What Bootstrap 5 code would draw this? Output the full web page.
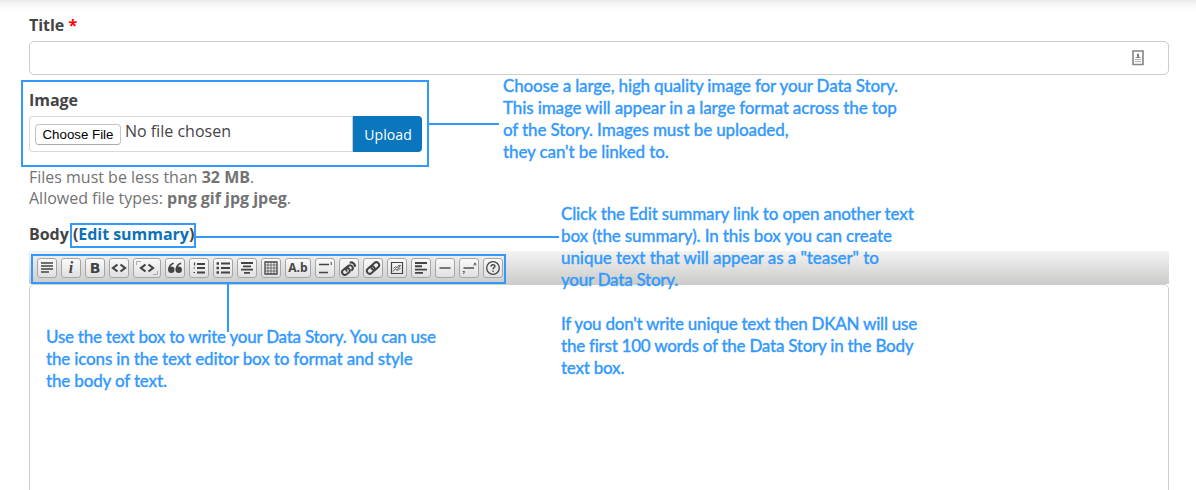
<!DOCTYPE html>
<html lang="en">
<head>
<meta charset="utf-8">
<meta name="viewport" content="width=device-width, initial-scale=1">
<title>Create Data Story</title>
<link href="https://cdn.jsdelivr.net/npm/bootstrap@5.3.0/dist/css/bootstrap.min.css" rel="stylesheet">
<style>
html, body { height: 490px; overflow: hidden; }
body { font-family: "Open Sans", sans-serif; font-size: 16px; line-height: 21px; color: #444; background: #fff; }
.page { height: 490px; padding: 15px 27px 0 29px; background: linear-gradient(#e9e9e9, #f6f6f6 4px, #fcfcfc 8px, #fff 13px) no-repeat 0 0 / 100% 13px; }
.field-label { font-weight: 700; font-size: 16px; line-height: 21px; margin: 0; display: block; letter-spacing: -.03px; }
.title-box { height: 34px; border: 1px solid #ccc; border-radius: 5px; padding-right: 24px; margin: 5px 0 15px; }
.req { color: #f00; }
.upload-row { width: 393px; height: 36px; margin: 5px 0 15px; }
.file-box { border: 1px solid #d9d9d9; border-right-color: #ccc; border-radius: 4px 0 0 4px; padding: 4px 0 0 5px; }
.choose { font: 13.3px/19px "Liberation Sans", Arial, sans-serif; color: #000; width: 86px; height: 21px; border: 1px solid #c4c4c4; border-bottom-color: #aaa; border-radius: 4px; background: #fff; padding: 0; margin-top: 3px; }
.no-file { margin-left: 4px; }
.btn-upload { width: 69px; border: 0; border-radius: 0 4px 4px 0; background: #0a76bd; color: #fff; font-size: 14px; padding: 0 0 0 1px; letter-spacing: .1px; }
.help { color: #737373; letter-spacing: -.01px; }
.body-label { margin: 15px 0 6px; }
.body-label a { color: #0a72b8; text-decoration: none; }
.tools { height: 33px; padding: 7px 8px; gap: 4px; background: linear-gradient(#f3f3f3, #cbcdca); }
.tool { width: 20px; height: 20px; border: 1px solid #a6a6a6; border-radius: 3px; background: linear-gradient(#fafafa, #e0e0e0); color: #444; padding: 0; flex: none; display: flex; align-items: center; justify-content: center; }
.tool svg { display: block; fill: none; stroke: currentColor; stroke-width: 1.6; }
.tool.w28 { width: 28px; }
.tool.w26 { width: 26px; font: 700 12px/16px "Open Sans", sans-serif; }
.tool-i { font: italic 700 16px/16px "Liberation Serif", serif; }
.tool-b { font: 700 14px/18px "DejaVu Sans", sans-serif; }
.body-box { height: 230px; border: 1px solid #ccc; border-radius: 5px; background: #fff; }
/* callouts laid over the form */
.frame { position: absolute; border: 2px solid #3399fd; pointer-events: none; }
.wire { position: absolute; background: #3399fd; }
.note { position: absolute; color: #3399fd; font: 500 17px/22px Lato, sans-serif; -webkit-text-stroke: .3px #3399fd; white-space: nowrap; letter-spacing: -.12px; }
.note span { display: block; height: 22px; }
.note .t1 { letter-spacing: -.07px; }
.note .t2 { letter-spacing: -.165px; }
.note .t3 { letter-spacing: -.25px; }
</style>
</head>
<body>
<main class="page position-relative overflow-hidden">
  <label class="field-label">Title <span class="req">*</span></label>
  <div class="title-box d-flex align-items-center justify-content-end">
    <svg width="12" height="16" viewBox="0 0 12 16"><path d="M1 1h10v13.500H1z" fill="#fff" stroke="#858585" stroke-width="1.600"/><path d="M6 3.200l1.200 1.300-.5 2.300L9 8H3l2.300-1.200-.5-2.300z" fill="#777"/><path d="M3 9.500h6M3 11.500h6" stroke="#aaa"/></svg>
  </div>
  <label class="field-label">Image</label>
  <div class="upload-row d-flex">
    <div class="file-box d-flex align-items-start flex-grow-1"><button class="choose">Choose File</button><span class="no-file">No file chosen</span></div>
    <button class="btn-upload">Upload</button>
  </div>
  <div class="help">Files must be less than <b>32 MB</b>.<br>Allowed file types: <b>png gif jpg jpeg</b>.</div>
  <label class="field-label body-label">Body (<a href="#">Edit summary</a>)</label>
  <div class="tools d-flex">
    <button class="tool"><svg width="16" height="16"><path d="M2 3h12M2 6h12M2 9h12M2 12h8"/></svg></button>
    <button class="tool tool-i">i</button>
    <button class="tool tool-b">B</button>
    <button class="tool"><svg width="16" height="16"><path d="M6.500 4.500L2 8l4.500 3.500M9.500 4.500L14 8l-4.500 3.500" stroke-width="2.200"/></svg></button>
    <button class="tool w28"><svg width="24" height="16"><path d="M10.500 4.500L6 8l4.500 3.500M13.500 4.500L18 8l-4.500 3.500" stroke-width="2.200"/><path d="M1.500 5V1.500H6M18 14.500h4.500V11" stroke="#aaa" stroke-width="1"/></svg></button>
    <button class="tool"><svg width="16" height="16"><g fill="currentColor" stroke="none"><circle cx="4.300" cy="9.800" r="3.200"/><circle cx="11.700" cy="9.800" r="3.200"/></g><path d="M2 9.500C2 6 3.500 4 6.700 3.200M9.400 9.500c0-3.500 1.500-5.500 4.700-6.300"/></svg></button>
    <button class="tool"><svg width="16" height="16"><path d="M6 4h8M6 8h8M6 12.500h8" stroke-width="2"/><path d="M3.500 2.500v3M2.500 8H4M2.500 12.500H4" stroke-width="1.200"/></svg></button>
    <button class="tool"><svg width="16" height="16"><path d="M6 3.500h9M6 8h9M6 12.500h9" stroke-width="2"/><path d="M1.500 3.500h2.500M1.500 8h2.500M1.500 12.500h2.500" stroke-width="2.400"/></svg></button>
    <button class="tool"><svg width="16" height="16"><path d="M2 3h12M4 6.300h8M2 9.600h12M5 12.900h6" stroke-width="1.800"/></svg></button>
    <button class="tool"><svg width="16" height="16"><path d="M2 2h12v12H2z" stroke-width="1.300"/><path d="M5 2v12M8 2v12M11 2v12M2 5h12M2 8h12M2 11h12" stroke-width=".7"/></svg></button>
    <button class="tool w26">A.b</button>
    <button class="tool"><svg width="16" height="16"><path d="M2 4.500h10M2 12.500h9" stroke-width="1.400"/><path d="M14.200 2v3" stroke-width="1"/></svg></button>
    <button class="tool"><svg width="16" height="16" stroke-linecap="round"><g transform="rotate(-38 7 10)" stroke-width="2"><rect x=".5" y="7" width="8" height="5.500" rx="2.700"/><path d="M5.500 9.800c0-2 1-2.800 2.700-2.800h1.600c3.600 0 3.600 5.500 0 5.500"/></g><path d="M9.500 2.500c2.200-.3 4.200 1.200 4.500 3.500" stroke-width="2.200"/></svg></button>
    <button class="tool"><svg width="16" height="16"><g transform="rotate(-42 8 8)" stroke-width="2"><rect x=".8" y="5.200" width="8.600" height="5.600" rx="2.800"/><rect x="6.600" y="5.200" width="8.600" height="5.600" rx="2.800"/></g></svg></button>
    <button class="tool"><svg width="16" height="16"><path d="M2.500 2.500h11v11h-11z" stroke-width="1.200"/><path d="M4 11.500l2.500-3 1.500 2 3.500-5.500M4.500 8.500l2-2 1.500 1.500L9.500 5.500l2 .5M9 10.500l2.500-2.500" stroke-width=".8"/></svg></button>
    <button class="tool"><svg width="16" height="16"><path d="M2 3h12M2 6.300h7M2 9.600h12M2 12.900h8" stroke-width="1.900"/></svg></button>
    <button class="tool"><svg width="16" height="16"><path d="M2.500 8h11" stroke-width="1.400"/></svg></button>
    <button class="tool"><svg width="16" height="16"><path d="M2.500 8h10.500" stroke-width="1.400"/><path d="M12.800 5.500l1.200-2.700 1 2.700M1.800 11.500h1.700l-1 2.500" stroke-width=".9"/></svg></button>
    <button class="tool"><svg width="16" height="16"><circle cx="8" cy="8" r="6.300" stroke-width="1.300"/><path d="M6 6.700c0-2.600 4-2.500 4-.4 0 1.300-2 1.400-2 3M8 10.600v1.500" stroke-width="1.300"/></svg></button>
  </div>
  <div class="body-box"></div>

  <div class="frame" style="left:21px;top:80px;width:408px;height:87px"></div>
  <div class="wire" style="left:429px;top:123px;width:70px;height:2px"></div>
  <div class="frame" style="left:70px;top:223px;width:126px;height:25px"></div>
  <div class="wire" style="left:196px;top:236px;width:363px;height:2px"></div>
  <div class="frame" style="left:31px;top:254px;width:475px;height:30px"></div>
  <div class="wire" style="left:227px;top:284px;width:2px;height:48px"></div>

  <div class="note" style="left:503px;top:75px"><span class="t2">Choose a large, high quality image for your Data Story.</span><span>This image will appear in a large format across the top</span><span>of the Story. Images must be uploaded,</span><span>they can't be linked to.</span></div>
  <div class="note" style="left:561px;top:203px"><span class="t2">Click the Edit summary link to open another text</span><span>box (the summary). In this box you can create</span><span class="t1">unique text that will appear as a "teaser" to</span><span class="t3">your Data Story.</span><span></span><span class="t3">If you don't write unique text then DKAN will use</span><span class="t3">the first 100 words of the Data Story in the Body</span><span class="t3">text box.</span></div>
  <div class="note" style="left:46px;top:326px"><span class="t3">Use the text box to write your Data Story. You can use</span><span class="t2">the icons in the text editor box to format and style</span><span class="t2">the body of text.</span></div>
</main>
<script src="https://cdn.jsdelivr.net/npm/bootstrap@5.3.0/dist/js/bootstrap.bundle.min.js"></script>
</body>
</html>
